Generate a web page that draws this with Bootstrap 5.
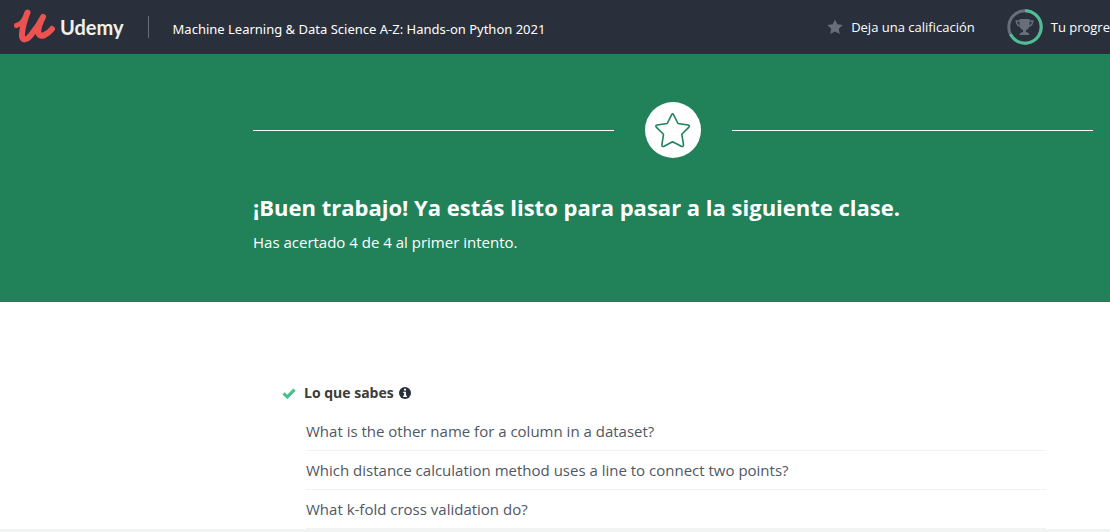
<!DOCTYPE html>
<html lang="es">
<head>
<meta charset="utf-8">
<meta name="viewport" content="width=device-width, initial-scale=1">
<title>Udemy - Resultados del cuestionario</title>
<link href="https://cdn.jsdelivr.net/npm/bootstrap@5.3.0/dist/css/bootstrap.min.css" rel="stylesheet">
<style>
  body { font-family: "Open Sans", "Noto Sans", sans-serif; font-size: 15px; line-height: 24px; color: #505763; }
  .topbar { background: #29303b; height: 54px; padding-left: 14px; }
  .topbar, .topbar .btn { font-size: 13px; line-height: 20px; }
  .topbar a, .topbar button { color: #fff; text-decoration: none; white-space: nowrap; }
  .topbar .brand-name { color: #f0f0e8; font: 700 20px/24px Lato, sans-serif; margin-left: 5px; }
  .brand-logo { width: 41px; height: 36px; }
  .divider { width: 1px; height: 22px; background: #686f7a; margin: 0 24px; }
  .rate { margin-right: 32px; }
  .course { padding-top: 4px; font-family: "Noto Sans", "Open Sans", sans-serif; }
  .hero { background: #21825a; color: #fff; padding: 48px 17px 48px 253px; }
  .rule { height: 1px; background: #fff; }
  .medal { width: 56px; height: 56px; margin: 0 31px; }
  .hero h1 { font-size: 22px; line-height: 32px; margin: 33px 0 7px; }
  .results { padding: 80px 64px 0 282px; }
  .results h2 { font-size: 14px; line-height: 22px; color: #3c3b37; margin: 0; }
  .info { margin-left: 5px; }
  .questions { margin-left: 24px; padding-top: 8px; }
  .questions li { padding: 7px 0; border-bottom: 1px solid #f2f3f5; }
  .bottom-strip { background: #f2f3f3; }
</style>
</head>
<body class="d-flex flex-column min-vh-100 overflow-x-hidden bg-white">
<header class="topbar d-flex align-items-center">
  <a href="#" class="d-flex align-items-center" aria-label="Udemy">
    <svg class="brand-logo" viewBox="0 0 41 36" fill="none" stroke="#ec5252" stroke-linecap="round" stroke-linejoin="round" aria-hidden="true">
      <path d="M2.500 16.500C8 15 11 10 13 4" stroke-width="5"/>
      <path d="M13.500 3.500C11 10 8.500 17 8 25C7.500 33 13 31 17 26C22 20 26 14 29 8C25.500 15 23.500 20 24.500 24C26 30 34 25 38 20" stroke-width="6"/>
    </svg>
  </a>
  <a href="#" class="brand-name">Udemy</a>
  <div class="divider"></div>
  <a href="#" class="course">Machine Learning &amp; Data Science A-Z: Hands-on Python 2021</a>
  <button type="button" class="rate btn p-0 border-0 ms-auto d-flex align-items-center gap-2">
    <svg width="16" height="16" viewBox="0 0 16 16" fill="#686f7a" aria-hidden="true"><path d="m8 .4 2.300 4.900 5.400.7-3.900 3.700.9 5.400L8 12.500l-4.700 2.600.9-5.400L.3 6l5.400-.7z"/></svg>
    <span>Deja una calificación</span>
  </button>
  <a href="#" class="d-flex align-items-center gap-2 flex-shrink-0">
    <svg class="flex-shrink-0" width="36" height="36" viewBox="0 0 36 36" fill="none" aria-hidden="true">
      <circle cx="18" cy="18" r="16.200" stroke="#686f7a" stroke-width="3"/>
      <path d="M18 1.800A16.200 16.200 0 1 1 3.500 25.200" stroke="#4dbf93" stroke-width="3"/>
      <path d="M12.500 10h10v6c0 3-2 4.500-3.500 5v2c1.500.3 3.500 1.200 3.500 3h-10c0-1.800 2-2.700 3.500-3v-2c-1.500-.5-3.500-2-3.500-5z" fill="#686f7a"/>
      <path d="M13 12H9.300c0 3 2 5 5 5.500M22 12h3.700c0 3-2 5-5 5.500" stroke="#686f7a" stroke-width="1.500"/>
    </svg>
    <span>Tu progre</span>
  </a>
</header>
<main class="d-flex flex-column">
  <section class="hero">
    <div class="d-flex align-items-center">
      <div class="rule flex-fill"></div>
      <svg class="medal flex-shrink-0" viewBox="0 0 56 56" aria-hidden="true">
        <circle cx="28" cy="28" r="28" fill="#fff"/>
        <path d="M26.600 12.800Q27.600 10.800 28.600 12.800L33 21.500 43 23Q45.500 23.600 43.700 25.400L36.800 32.300 38.500 42.600Q38.600 45.200 36.300 44.200L27.600 39.800 19 44.200Q16.600 45.200 16.900 42.600L18.500 32.300 11.500 25.400Q9.800 23.600 12.200 23L22.200 21.500Z" fill="none" stroke="#21825a" stroke-width="1.600" stroke-linejoin="round"/>
      </svg>
      <div class="rule flex-fill"></div>
    </div>
    <h1 class="fw-bold">¡Buen trabajo! Ya estás listo para pasar a la siguiente clase.</h1>
    <p class="m-0">Has acertado 4 de 4 al primer intento.</p>
  </section>
  <section class="results">
    <div class="d-flex align-items-center">
      <svg width="14" height="12" viewBox="0 0 14 12" aria-hidden="true"><path d="M1.500 6.300 5.300 9.900 12.500 2.700" fill="none" stroke="#46c28e" stroke-width="3.200"/></svg>
      <h2 class="fw-bold ms-2">Lo que sabes</h2>
      <svg class="info" width="12" height="12" viewBox="0 0 12 12" aria-hidden="true"><circle cx="6" cy="6" r="6" fill="#29303b"/><path d="M5 1.800h2v1.700H5zM4.200 4.700H7v3.800h.9V10H4.200V8.500h.9V6h-.9z" fill="#fff"/></svg>
    </div>
    <ul class="questions list-unstyled mb-0">
      <li>What is the other name for a column in a dataset?</li>
      <li>Which distance calculation method uses a line to connect two points?</li>
      <li>What k-fold cross validation do?</li>
    </ul>
  </section>
</main>
<footer class="bottom-strip flex-fill"></footer>
<script src="https://cdn.jsdelivr.net/npm/bootstrap@5.3.0/dist/js/bootstrap.bundle.min.js"></script>
</body>
</html>
